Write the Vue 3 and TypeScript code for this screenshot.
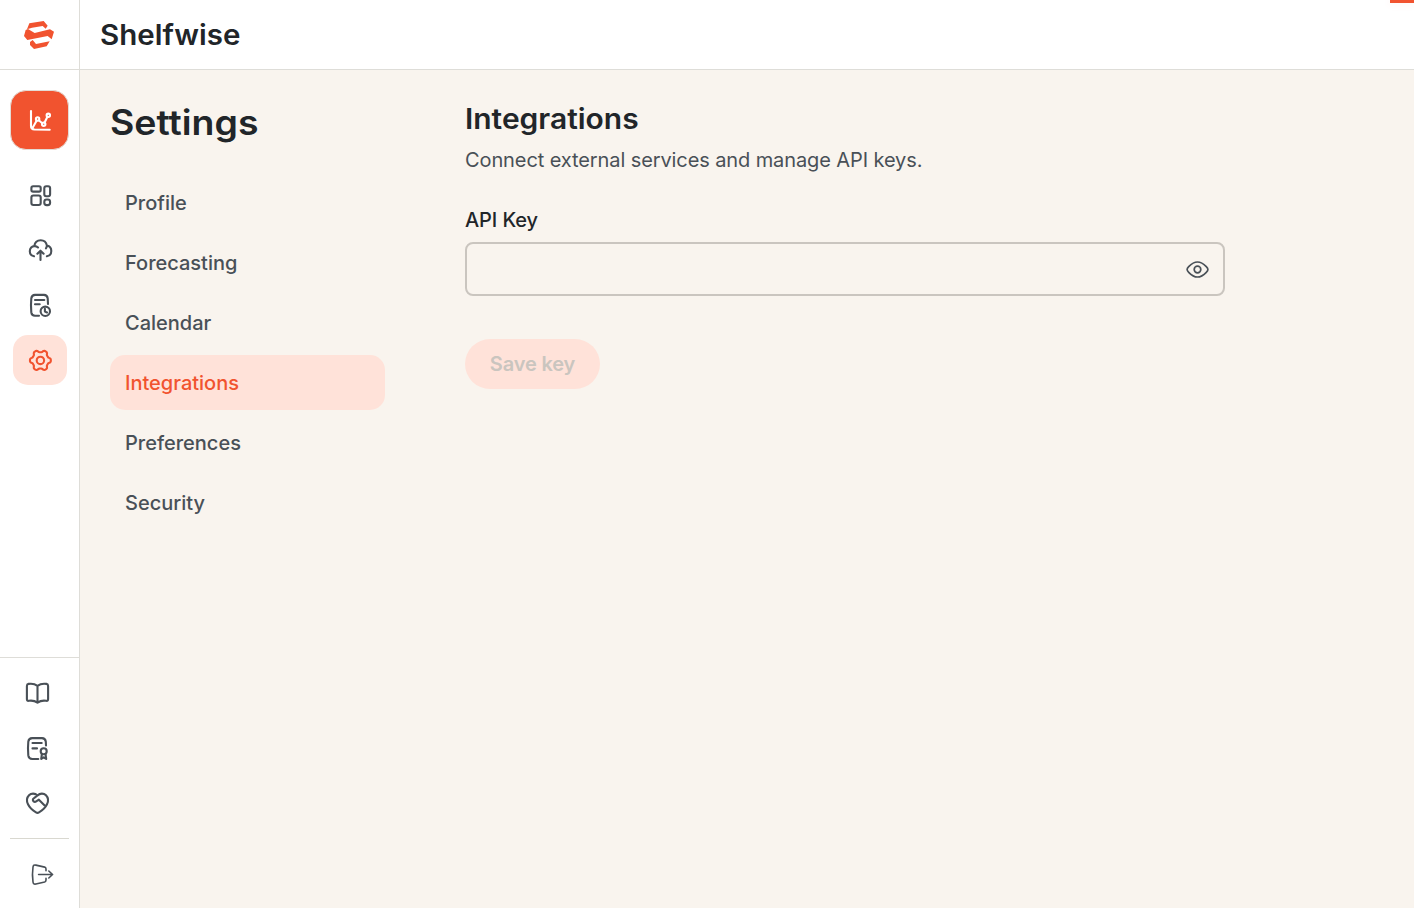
<script setup lang="ts">
import { ref } from 'vue'

interface Icon {
  name: string
  body: string
}

function gearPath(cx: number, cy: number, base: number, depth: number): string {
  const points: string[] = []
  for (let deg = 0; deg < 360; deg += 4) {
    const t = (deg * Math.PI) / 180
    const r = base + depth * Math.tanh(1.8 * Math.cos(6 * t))
    points.push(`${(cx + r * Math.cos(t)).toFixed(2)} ${(cy + r * Math.sin(t)).toFixed(2)}`)
  }
  return `M${points.join('L')}Z`
}

const mainNav: Icon[] = [
  {
    name: 'Dashboard',
    body: '<rect x="6.4" y="6.2" width="9.3" height="5.4" rx="1.7"/><rect x="6.4" y="15.5" width="9.3" height="9.5" rx="2"/><rect x="19.3" y="6.2" width="5.8" height="10" rx="2"/><rect x="19.3" y="19.5" width="5.8" height="5.6" rx="2.4"/>',
  },
  {
    name: 'Upload',
    body: '<path d="M9 21.3C6.5 20.9 4.8 18.9 4.8 16.2C4.8 13.3 7 11.1 9.3 11.1C9.8 7.5 12.4 5.3 15.7 5.3C19 5.3 21.3 7.5 21.9 10.6C24.4 11.2 26.3 13.2 26.3 16C26.3 18.9 24.5 20.9 21.9 21.3M9.3 11.1C10.7 11 12 11.5 13 12.5M21.9 10.6C21.8 11.7 21.5 12.5 21 13.3M15.5 25V15.8M12.4 18.7L15.5 15.7L18.6 18.7"/>',
  },
  {
    name: 'History',
    body: '<path d="M14 25.8H10C7.6 25.8 6.6 24.8 6.3 22.4C5.9 18 5.9 12.5 6.3 8.4C6.6 6 7.6 5 10 4.9H19C21.4 5 22.4 6 22.7 8.4L23 14M10 10H19.3M10 14.2H14.7"/><circle cx="20.3" cy="21.3" r="4.7"/><path d="M19.9 18.8V21.6L22 22.5"/>',
  },
  {
    name: 'Settings',
    body: `<path d="${gearPath(15.4, 15.4, 9.3, 1.2)}"/><circle cx="15.4" cy="15.4" r="3.7"/>`,
  },
]

const helpNav: Icon[] = [
  {
    name: 'Guide',
    body: '<path d="M15.5 7.8C12.8 5.8 9.5 5.4 6.5 5.9C5.3 6.1 4.9 6.8 4.9 8V21.3C4.9 22.7 5.6 23 6.8 22.8C10 22.3 12.9 22.8 15.5 24.7C18.1 22.8 21 22.3 24.2 22.8C25.4 23 26.1 22.7 26.1 21.3V8C26.1 6.8 25.7 6.1 24.5 5.9C21.5 5.4 18.2 5.8 15.5 7.8V24.7"/>',
  },
  {
    name: 'License',
    body: '<path d="M16.3 26H10.2C7.7 25.9 6.6 24.8 6.3 22.4C5.9 18 5.9 12.6 6.3 8.6C6.6 6.2 7.7 5.2 10.2 5.1H20C22.5 5.2 23.5 6.2 23.8 8.6L24 12.5M10.5 10H19.7M10.5 15.4H15"/><circle cx="21.7" cy="18.2" r="3"/><path d="M19.9 21L19.2 26L21.7 24.3L24.2 26L23.5 21"/>',
  },
  {
    name: 'Support',
    body: '<path d="M15.5 7.4C18 5 21.8 5 24 7.3C26.2 9.6 26.6 13 25 16.3C23.3 19.8 19.7 22.8 17 24.4C16 25 15 25 14 24.4C11.3 22.8 7.7 19.8 6 16.3C4.4 13 4.8 9.6 7 7.3C9.2 5 13 5 15.5 7.4ZM15.5 7.4L11.3 10.8C10.6 11.5 10.8 12.7 11.6 13.4C12.4 14.1 13.4 14 14.2 13.4L16.9 11.7L23.4 18.2"/>',
  },
]

const sections = ['Profile', 'Forecasting', 'Calendar', 'Integrations', 'Preferences', 'Security']
const active = ref('Integrations')
const apiKey = ref('')
const revealed = ref(false)
</script>

<template>
  <div class="app">
    <div class="progress"></div>
    <aside class="rail">
      <div class="brand">
        <svg width="34" height="32" viewBox="66 57 102 96" fill="#f1532f">
          <path d="M81 88L88 70L131 63L143 77L137 86L128 78L96 83Z" />
          <path d="M77 90L84 87L104 99L150 88L162 95L155 118L143 108L82 120L72 108Z" />
          <path d="M90 126L98 120L108 132L149 124L140 139L102 147L90 135Z" />
        </svg>
      </div>
      <button class="primary" aria-label="Forecast">
        <svg class="icon" viewBox="0 0 30 30">
          <path d="M6 6V21Q6 24.3 9.5 24.5L24.7 24.7M7.8 22.5L11.6 15.8M14 15.5L17.3 18.2M19.6 17.5L22.3 12" />
          <circle cx="12.6" cy="14" r="1.7" /><circle cx="18.7" cy="19.2" r="1.7" /><circle cx="23.3" cy="10.3" r="1.7" />
        </svg>
      </button>
      <nav class="main-nav">
        <button v-for="item in mainNav" :key="item.name" class="nav-item" :class="{ current: item.name === 'Settings' }" :aria-label="item.name">
          <svg class="icon" viewBox="0 0 30 30" v-html="item.body"></svg>
        </button>
      </nav>
      <div class="rail-bottom">
        <button v-for="item in helpNav" :key="item.name" class="help-item" :aria-label="item.name">
          <svg class="icon" viewBox="0 0 30 30" v-html="item.body"></svg>
        </button>
        <div class="logout">
          <svg class="icon thin" viewBox="0 0 30 30">
            <path d="M19 10.7V9C19 7.9 18.6 7.4 17.7 7.1L8.9 5.1C7.1 4.7 6.2 5.2 6 7C5.3 12 5.3 17 6 22C6.2 23.9 7.1 24.3 8.9 24L17.7 22C18.6 21.7 19 21.2 19 20V18.2M11.6 14.5H25.6M21.8 11L25.6 14.5L21.8 18" />
          </svg>
        </div>
      </div>
    </aside>

    <div class="body">
      <header class="topbar"><span class="product">Shelfwise</span></header>
      <main class="content">
        <section class="menu">
          <h1>Settings</h1>
          <ul>
            <li v-for="s in sections" :key="s" :class="{ active: s === active }" @click="active = s">{{ s }}</li>
          </ul>
        </section>
        <section class="panel">
          <h2>Integrations</h2>
          <p>Connect external services and manage API keys.</p>
          <label for="api-key">API Key</label>
          <div class="field">
            <input id="api-key" v-model="apiKey" :type="revealed ? 'text' : 'password'" />
            <svg class="eye" width="25" height="21" viewBox="0 0 25 21" @click="revealed = !revealed">
              <path d="M2.1 10.5C2.1 9.6 2.8 8.6 3.7 7.7C6 5.3 8.9 3 12.5 3S19 5.3 21.3 7.7C22.2 8.6 22.9 9.6 22.9 10.5S22.2 12.4 21.3 13.3C19 15.7 16.1 18 12.5 18S6 15.7 3.7 13.3C2.8 12.4 2.1 11.4 2.1 10.5Z" />
              <circle cx="12.5" cy="10.5" r="3.3" />
            </svg>
          </div>
          <button class="save" :disabled="!apiKey">Save key</button>
        </section>
      </main>
    </div>
  </div>
</template>

<style>
body {
  margin: 0;
  overflow: hidden;
}
</style>

<style scoped>
* {
  box-sizing: border-box;
}
.app {
  position: relative;
  display: flex;
  height: 100vh;
  background: #f9f4ee;
  color: #212529;
  font-family: Inter, "Liberation Sans", sans-serif;
  font-size: 20px;
}
button {
  border: 0;
  padding: 0;
  background: none;
  font: inherit;
  color: inherit;
}
.progress {
  position: absolute;
  top: 0;
  right: 0;
  width: 24px;
  height: 3px;
  background: #f1532f;
  box-shadow: 0 0 10px rgba(241, 83, 47, 0.12);
}
.rail {
  display: flex;
  flex-direction: column;
  flex: none;
  width: 80px;
  background: #fff;
  border-right: 1px solid #deddd8;
  color: #495057;
}
.brand {
  display: flex;
  height: 70px;
  padding: 19px 0 0 22px;
  border-bottom: 1px solid #deddd8;
}
.primary {
  display: flex;
  align-items: center;
  justify-content: center;
  width: 59px;
  height: 60px;
  margin: 20px 0 0 10px;
  border: 1px solid #e3dcd6;
  border-radius: 16px;
  background: #f1532f;
  color: #fff;
}
.icon {
  display: block;
  width: 30px;
  height: 30px;
  fill: none;
  stroke: currentColor;
  stroke-width: 2.1;
  stroke-linecap: round;
  stroke-linejoin: round;
}
.primary .icon {
  margin-left: 1px;
}
.icon.thin {
  stroke-width: 1.6;
}
.main-nav {
  display: flex;
  flex-direction: column;
  gap: 5px;
  margin: 20px 0 0 13px;
}
.nav-item {
  display: flex;
  align-items: center;
  width: 54px;
  height: 50px;
  padding-left: 12px;
  border-radius: 15px;
}
.nav-item.current {
  background: #ffe2d9;
  color: #f1532f;
}
.rail-bottom {
  display: flex;
  flex-direction: column;
  gap: 25px;
  height: 251px;
  margin-top: auto;
  padding: 20px 10px 0;
  border-top: 1px solid #deddd8;
}
.help-item {
  width: 30px;
  height: 30px;
  margin-left: 12px;
}
.logout {
  flex: 1;
  margin-top: -5px;
  padding: 21px 0 0 17px;
  border-top: 1px solid #d9d8d0;
}
.body {
  display: flex;
  flex: 1;
  flex-direction: column;
}
.topbar {
  display: flex;
  align-items: center;
  height: 70px;
  padding-left: 20px;
  background: #fff;
  border-bottom: 1px solid #deddd8;
}
.product,
h1,
h2 {
  font-family: Inter, "Liberation Sans", sans-serif;
  font-weight: 600;
  transform-origin: left center;
}
.product {
  font-size: 28px;
  line-height: 36px;
  transform: scaleX(1.053);
}
.content {
  display: flex;
  gap: 80px;
  padding: 30px;
}
.menu {
  width: 275px;
}
h1 {
  margin: 0;
  font-size: 35px;
  line-height: 45px;
  transform: scaleX(1.07);
}
ul {
  display: flex;
  flex-direction: column;
  gap: 5px;
  margin: 30px 0 0;
  padding: 0;
  list-style: none;
}
li {
  height: 55px;
  padding-left: 15px;
  border-radius: 15px;
  color: #495057;
  line-height: 56px;
  font-weight: 500;
  cursor: pointer;
}
li.active {
  background: #ffe2d9;
  color: #f1532f;
}
.panel {
  width: 760px;
}
h2 {
  margin: 0;
  font-size: 28px;
  line-height: 38px;
  transform: scaleX(1.07);
}
p {
  margin: 7px 0 0;
  color: #495057;
  line-height: 30px;
  letter-spacing: -0.1px;
}
label {
  display: block;
  margin-top: 30px;
  line-height: 30px;
  font-weight: 500;
  letter-spacing: -0.1px;
}
.field {
  display: flex;
  align-items: center;
  height: 54px;
  margin-top: 7px;
  padding-right: 13px;
  border: 2px solid #cac5bf;
  border-radius: 8px;
}
input {
  flex: 1;
  min-width: 0;
  height: 100%;
  padding: 0 14px;
  border: 0;
  outline: 0;
  background: none;
  font: inherit;
}
.eye {
  fill: none;
  stroke: #495057;
  stroke-width: 1.7;
}
.save {
  width: 135px;
  height: 50px;
  margin-top: 43px;
  border-radius: 25px;
  background: #f1532f;
  color: #fff;
  font-weight: 600;
  letter-spacing: -0.15px;
}
.save:disabled {
  background: #ffe2d9;
  color: #cac5bf;
}
</style>
